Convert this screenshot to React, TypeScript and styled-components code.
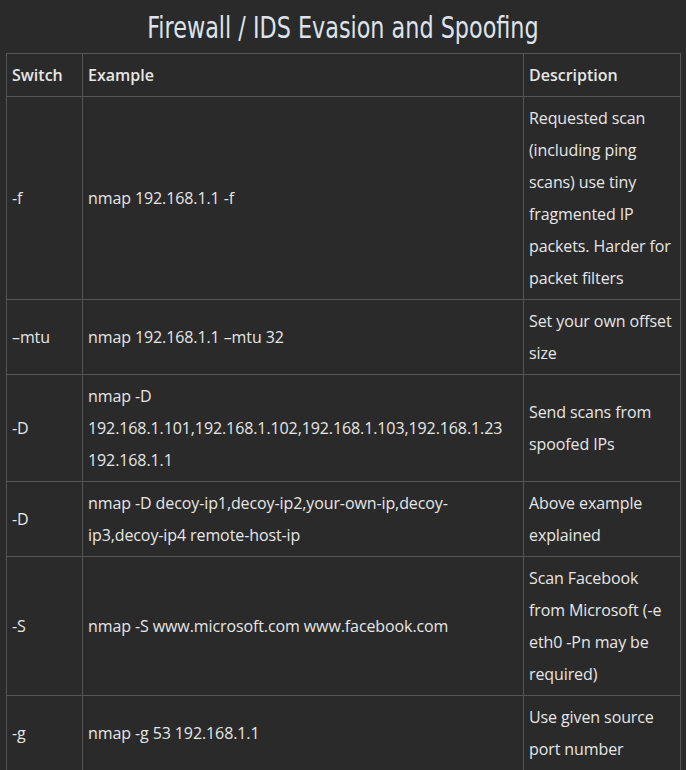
import React from 'react';
import styled, { createGlobalStyle } from 'styled-components';

const GlobalStyle = createGlobalStyle`
  html, body {
    margin: 0;
    background: #2a2a2a;
  }
`;

const rows: [string, string, string][] = [
  ['-f', 'nmap 192.168.1.1 -f', 'Requested scan (including ping scans) use tiny fragmented IP packets. Harder for packet filters'],
  ['–mtu', 'nmap 192.168.1.1 –mtu 32', 'Set your own offset size'],
  ['-D', 'nmap -D 192.168.1.101,192.168.1.102,192.168.1.103,192.168.1.23 192.168.1.1', 'Send scans from spoofed IPs'],
  ['-D', 'nmap -D decoy-ip1,decoy-ip2,your-own-ip,decoy-ip3,decoy-ip4 remote-host-ip', 'Above example explained'],
  ['-S', 'nmap -S www.microsoft.com www.facebook.com', 'Scan Facebook from Microsoft (-e eth0 -Pn may be required)'],
  ['-g', 'nmap -g 53 192.168.1.1', 'Use given source port number'],
];

const App: React.FC = () => (
  <SPage>
    <GlobalStyle />
    <STitle>Firewall / IDS Evasion and Spoofing</STitle>
    <STable>
      <colgroup>
        <col style={{ width: 76 }} />
        <col style={{ width: 441 }} />
        <col style={{ width: 157 }} />
      </colgroup>
      <thead>
        <tr>
          <SHead>Switch</SHead>
          <SHead>Example</SHead>
          <SHead>Description</SHead>
        </tr>
      </thead>
      <tbody>
        {rows.map(([sw, ex, desc], i) => (
          <tr key={`row-${i}`}>
            <SCell>{sw}</SCell>
            <SCell>{ex}</SCell>
            <SCell>{desc}</SCell>
          </tr>
        ))}
      </tbody>
    </STable>
  </SPage>
);

export default App;

const SPage = styled.div`
  padding: 0 6px;
  background: #2a2a2a;
  min-height: 770px;
`;

const STitle = styled.h2`
  margin: 0;
  height: 53px;
  line-height: 54px;
  text-align: center;
  color: #dde3ec;
  font-family: "DejaVu Sans", sans-serif;
  font-stretch: condensed;
  font-weight: normal;
  font-size: 31px;
  transform: scaleX(0.8);
`;

const STable = styled.table`
  width: 674px;
  table-layout: fixed;
  border-collapse: collapse;
  font-family: "Open Sans", sans-serif;
  font-size: 16px;
  color: #e6e6e6;
`;

const SHead = styled.th`
  height: 42px;
  padding: 0 5px;
  text-align: left;
  font-weight: 600;
  border: 1px solid #555;
`;

const SCell = styled.td`
  padding: 5px 2px 5px 5px;
  line-height: 32px;
  letter-spacing: -0.1px;
  vertical-align: middle;
  border: 1px solid #555;
  word-break: break-word;
`;
